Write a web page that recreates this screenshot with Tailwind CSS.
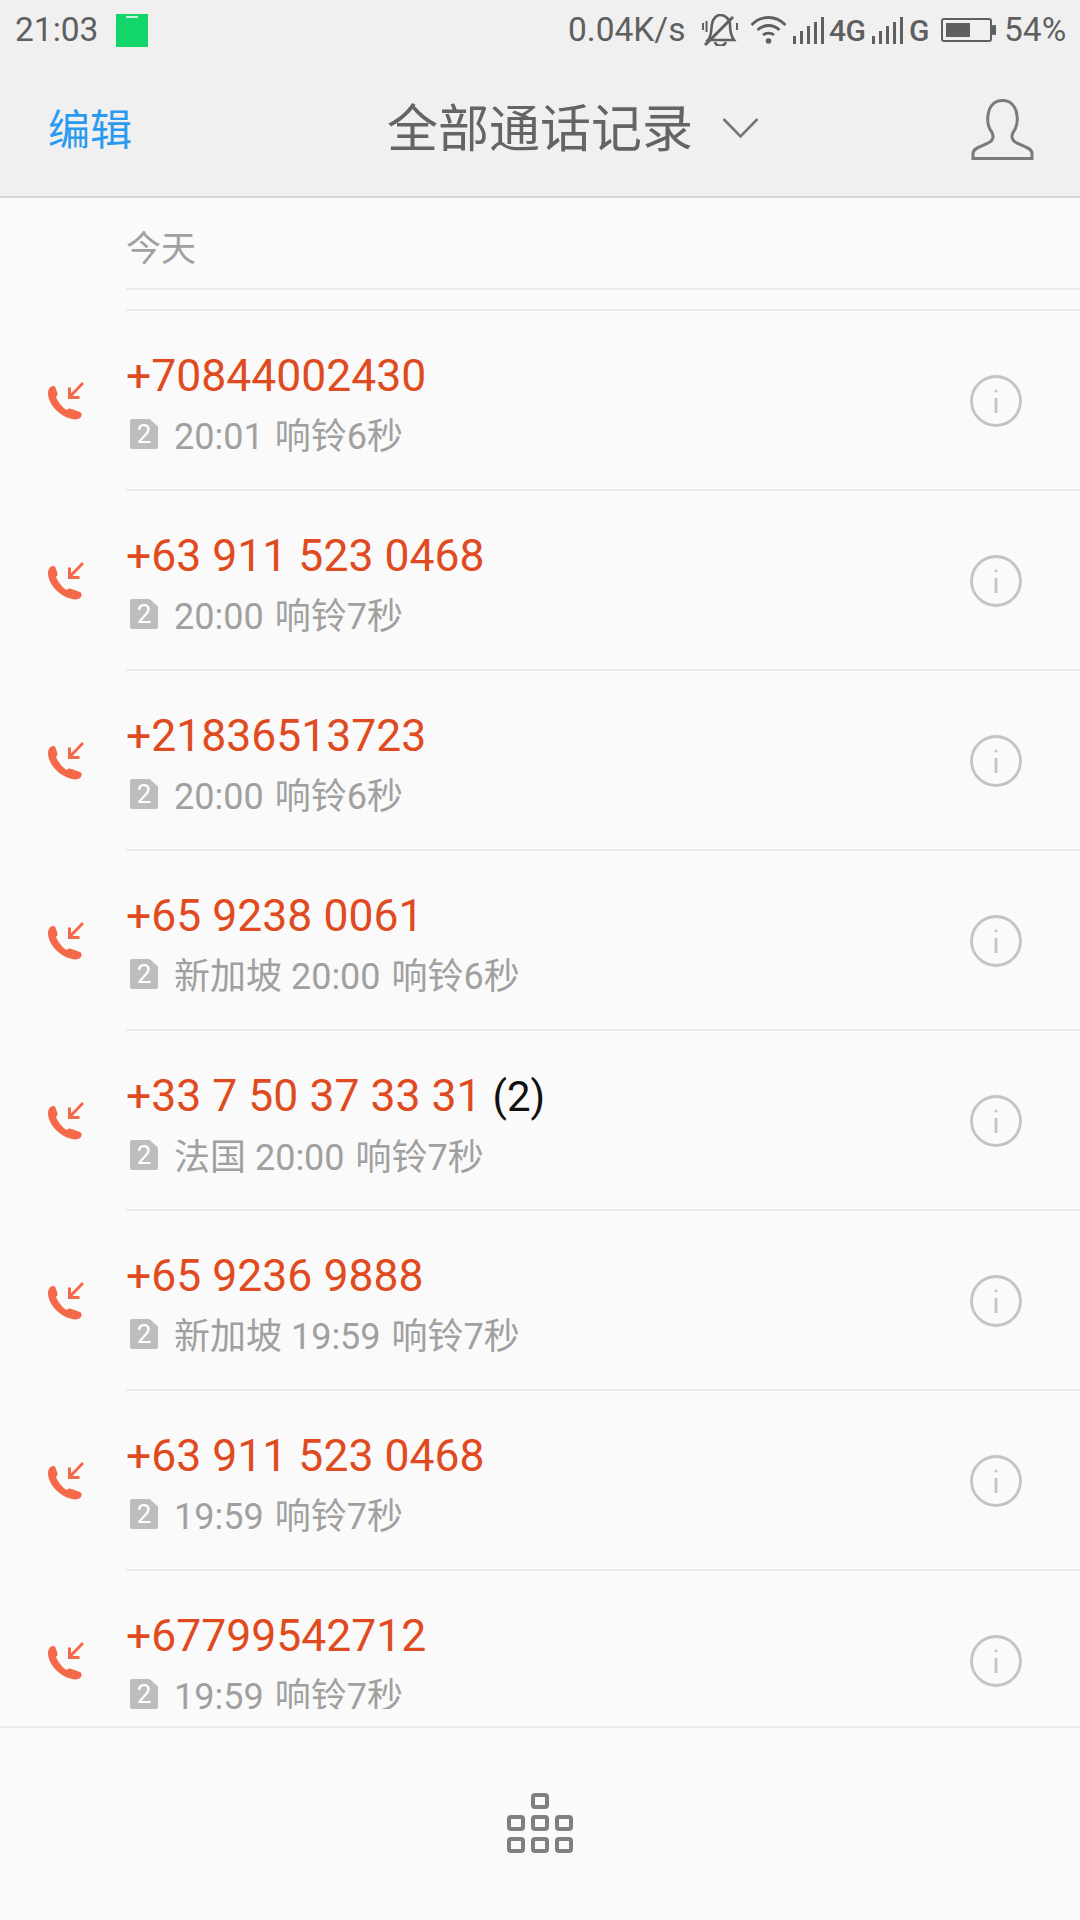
<!doctype html>
<html><head><meta charset="utf-8"><script src="https://cdn.jsdelivr.net/npm/@tailwindcss/browser@4"></script></head>
<body class="m-0">
<div class="w-[1080px] h-[1920px] bg-[#fafafa] overflow-hidden flex flex-col font-['Roboto','Noto_Sans_CJK_SC',sans-serif]">
 <header class="bg-[#f0f0f0] h-[198px] border-b-2 border-[#d8d8d8] flex flex-col shrink-0">
  <div class="h-[60px] flex items-center text-[33.5px] text-[#5f5f5f]">
   <span class="ml-[15px] w-[101px]">21:03</span>
   <div class="w-[32px] h-[33px] bg-[#12d66a] flex justify-center pt-[2px]"><div class="w-[12px] h-[2px] bg-[#c8f5dc]"></div></div>
   <span class="ml-[420px] w-[134px]">0.04K/s</span>
   <svg class="w-[36px] h-[32px]" viewBox="0 0 36 32" fill="none" stroke="#5f5f5f" stroke-width="2.600"><path d="M6 26 C10 22 9 14 10 10 C11 4 15 1 18 1 C23 1 28 5 28 11 C28 17 29 22 32 26 Z M13 28 C14 33 22 33 24 28"/><path d="M3 31 L31 3" stroke-width="3"/><path d="M1 9 V16 M4.500 7 V18 M35 9 V16" stroke-width="2"/></svg>
   <svg class="ml-[12px] w-[37px] h-[28px]" viewBox="0 0 37 28" fill="none" stroke="#5f5f5f" stroke-width="2.800"><path d="M1.500 9 C11 -1 26 -1 35.500 9 M7.500 14 C14 8 23 8 29.500 14 M13 19 C16 16.500 21 16.500 24 19"/><circle cx="18.500" cy="25" r="2.800" fill="#5f5f5f" stroke="none"/></svg>
   <svg class="ml-[6px] w-[31px] h-[27px]" viewBox="0 0 31 27" fill="#5f5f5f"><rect x="0" y="19" width="3" height="8"/><rect x="7" y="14" width="3" height="13"/><rect x="14" y="9" width="3" height="18"/><rect x="21" y="5" width="3" height="22"/><rect x="28" y="0" width="3" height="27"/></svg>
   <span class="ml-[5px] w-[38px] font-medium text-[30px] tracking-[-0.5px]">4G</span>
   <svg class="ml-[5px] w-[31px] h-[27px]" viewBox="0 0 31 27" fill="#5f5f5f"><rect x="0" y="19" width="3" height="8"/><rect x="7" y="14" width="3" height="13"/><rect x="14" y="9" width="3" height="18"/><rect x="21" y="5" width="3" height="22"/><rect x="28" y="0" width="3" height="27"/></svg>
   <span class="ml-[6px] w-[20px] font-medium text-[30px]">G</span>
   <svg class="ml-[12px] w-[55px] h-[24px]" viewBox="0 0 55 24" fill="none"><rect x="1" y="1" width="49" height="22" rx="2" stroke="#5f5f5f" stroke-width="2"/><rect x="5" y="5" width="24" height="14" fill="#5f5f5f"/><rect x="51" y="7" width="4" height="10" rx="1" fill="#5f5f5f"/></svg>
   <span class="ml-[8px]">54%</span>
  </div>
  <div class="flex-1 flex items-center">
   <span class="w-[387px] pl-[48px] pt-[4px] text-[42px] text-[#2a9af0]">编辑</span>
   <span class="text-[51px] pt-[4px] text-[#646464] w-[335px]">全部通话记录</span>
   <svg class="w-[37px] h-[22px]" viewBox="0 0 37 22" fill="none" stroke="#777" stroke-width="2.600"><path d="M1.500 2 L18.500 19.500 L35.500 2"/></svg>
   <svg class="ml-[212px] mt-[2px] w-[63px] h-[63px]" viewBox="0 0 63 62" fill="none" stroke="#7a7a7a" stroke-width="3"><path d="M2 60 H61 V55 C61 49 52 48 45 44 C41 42 40 38 42 34 C45 30 47 24 46 17 C45 7 39 2 31.500 2 C24 2 18 7 17 17 C16 24 18 30 21 34 C23 38 22 42 18 44 C11 48 2 49 2 55 Z"/></svg>
  </div>
 </header>
 <main class="h-[1511px] shrink-0 overflow-hidden">
  <div class="ml-[126px] h-[92px] border-b-2 border-[#ebebeb] flex items-center text-[35px] text-[#a0a0a0] pt-[14px]">今天</div>
  <div class="ml-[126px] h-[21px] border-b-2 border-[#ebebeb]"></div>

  <div class="flex h-[180px]"><div class="w-[126px] flex items-center pl-[44px]"><svg class="w-[40px] h-[42px]" viewBox="0 0 40 42" fill="none"><path d="M7 6.500 C9 5.500 11 6 11.500 7.500 L13.500 13.500 C13.800 15 13 16 12 17 C14 22 18 27 22.500 30 C24 28.500 25.500 28 27.500 29 L36 32 C38 33 38 35 37 37 C35.500 39 32 40 28 39 C15 36 4 24 4 13 C4 10 5 8 7 6.500Z" fill="#f4694a"/><path d="M39 3 L25.500 17 M25.500 7.500 V17.500 H35.500" stroke="#f4694a" stroke-width="3"/></svg></div><div class="flex-1 border-b-2 border-[#ebebeb] flex items-center"><div class="flex-1 self-start pt-[39px]"><div class="text-[44.500px] leading-[52px] text-[#e04a1f]">+70844002430</div><div class="mt-[11px] flex items-center text-[36px] leading-[48px] text-[#a0a0a0]"><div class="ml-[4px] mr-[16px] -translate-y-[3px] w-[28px] h-[30px] bg-[#bdbdbd] rounded-[2px] [clip-path:polygon(0_0,70%_0,100%_25%,100%_100%,0_100%)] flex items-center justify-center text-[26px] text-white">2</div><span>20:01<span class="ml-[11px]">响铃6秒</span></span></div></div><svg class="mr-[58px] mt-[2px] w-[52px] h-[52px]" viewBox="0 0 52 52" fill="none" stroke="#c4c4c4" stroke-width="2.800"><circle cx="26" cy="26" r="24.500"/><path d="M26 23 V38"/><circle cx="26" cy="16" r="1.500" fill="#c4c4c4" stroke="none"/></svg></div></div>

  <div class="flex h-[180px]"><div class="w-[126px] flex items-center pl-[44px]"><svg class="w-[40px] h-[42px]" viewBox="0 0 40 42" fill="none"><path d="M7 6.500 C9 5.500 11 6 11.500 7.500 L13.500 13.500 C13.800 15 13 16 12 17 C14 22 18 27 22.500 30 C24 28.500 25.500 28 27.500 29 L36 32 C38 33 38 35 37 37 C35.500 39 32 40 28 39 C15 36 4 24 4 13 C4 10 5 8 7 6.500Z" fill="#f4694a"/><path d="M39 3 L25.500 17 M25.500 7.500 V17.500 H35.500" stroke="#f4694a" stroke-width="3"/></svg></div><div class="flex-1 border-b-2 border-[#ebebeb] flex items-center"><div class="flex-1 self-start pt-[39px]"><div class="text-[44.500px] leading-[52px] text-[#e04a1f]">+63 911 523 0468</div><div class="mt-[11px] flex items-center text-[36px] leading-[48px] text-[#a0a0a0]"><div class="ml-[4px] mr-[16px] -translate-y-[3px] w-[28px] h-[30px] bg-[#bdbdbd] rounded-[2px] [clip-path:polygon(0_0,70%_0,100%_25%,100%_100%,0_100%)] flex items-center justify-center text-[26px] text-white">2</div><span>20:00<span class="ml-[11px]">响铃7秒</span></span></div></div><svg class="mr-[58px] mt-[2px] w-[52px] h-[52px]" viewBox="0 0 52 52" fill="none" stroke="#c4c4c4" stroke-width="2.800"><circle cx="26" cy="26" r="24.500"/><path d="M26 23 V38"/><circle cx="26" cy="16" r="1.500" fill="#c4c4c4" stroke="none"/></svg></div></div>

  <div class="flex h-[180px]"><div class="w-[126px] flex items-center pl-[44px]"><svg class="w-[40px] h-[42px]" viewBox="0 0 40 42" fill="none"><path d="M7 6.500 C9 5.500 11 6 11.500 7.500 L13.500 13.500 C13.800 15 13 16 12 17 C14 22 18 27 22.500 30 C24 28.500 25.500 28 27.500 29 L36 32 C38 33 38 35 37 37 C35.500 39 32 40 28 39 C15 36 4 24 4 13 C4 10 5 8 7 6.500Z" fill="#f4694a"/><path d="M39 3 L25.500 17 M25.500 7.500 V17.500 H35.500" stroke="#f4694a" stroke-width="3"/></svg></div><div class="flex-1 border-b-2 border-[#ebebeb] flex items-center"><div class="flex-1 self-start pt-[39px]"><div class="text-[44.500px] leading-[52px] text-[#e04a1f]">+21836513723</div><div class="mt-[11px] flex items-center text-[36px] leading-[48px] text-[#a0a0a0]"><div class="ml-[4px] mr-[16px] -translate-y-[3px] w-[28px] h-[30px] bg-[#bdbdbd] rounded-[2px] [clip-path:polygon(0_0,70%_0,100%_25%,100%_100%,0_100%)] flex items-center justify-center text-[26px] text-white">2</div><span>20:00<span class="ml-[11px]">响铃6秒</span></span></div></div><svg class="mr-[58px] mt-[2px] w-[52px] h-[52px]" viewBox="0 0 52 52" fill="none" stroke="#c4c4c4" stroke-width="2.800"><circle cx="26" cy="26" r="24.500"/><path d="M26 23 V38"/><circle cx="26" cy="16" r="1.500" fill="#c4c4c4" stroke="none"/></svg></div></div>

  <div class="flex h-[180px]"><div class="w-[126px] flex items-center pl-[44px]"><svg class="w-[40px] h-[42px]" viewBox="0 0 40 42" fill="none"><path d="M7 6.500 C9 5.500 11 6 11.500 7.500 L13.500 13.500 C13.800 15 13 16 12 17 C14 22 18 27 22.500 30 C24 28.500 25.500 28 27.500 29 L36 32 C38 33 38 35 37 37 C35.500 39 32 40 28 39 C15 36 4 24 4 13 C4 10 5 8 7 6.500Z" fill="#f4694a"/><path d="M39 3 L25.500 17 M25.500 7.500 V17.500 H35.500" stroke="#f4694a" stroke-width="3"/></svg></div><div class="flex-1 border-b-2 border-[#ebebeb] flex items-center"><div class="flex-1 self-start pt-[39px]"><div class="text-[44.500px] leading-[52px] text-[#e04a1f]">+65 9238 0061</div><div class="mt-[11px] flex items-center text-[36px] leading-[48px] text-[#a0a0a0]"><div class="ml-[4px] mr-[16px] -translate-y-[3px] w-[28px] h-[30px] bg-[#bdbdbd] rounded-[2px] [clip-path:polygon(0_0,70%_0,100%_25%,100%_100%,0_100%)] flex items-center justify-center text-[26px] text-white">2</div><span>新加坡 20:00<span class="ml-[11px]">响铃6秒</span></span></div></div><svg class="mr-[58px] mt-[2px] w-[52px] h-[52px]" viewBox="0 0 52 52" fill="none" stroke="#c4c4c4" stroke-width="2.800"><circle cx="26" cy="26" r="24.500"/><path d="M26 23 V38"/><circle cx="26" cy="16" r="1.500" fill="#c4c4c4" stroke="none"/></svg></div></div>

  <div class="flex h-[180px]"><div class="w-[126px] flex items-center pl-[44px]"><svg class="w-[40px] h-[42px]" viewBox="0 0 40 42" fill="none"><path d="M7 6.500 C9 5.500 11 6 11.500 7.500 L13.500 13.500 C13.800 15 13 16 12 17 C14 22 18 27 22.500 30 C24 28.500 25.500 28 27.500 29 L36 32 C38 33 38 35 37 37 C35.500 39 32 40 28 39 C15 36 4 24 4 13 C4 10 5 8 7 6.500Z" fill="#f4694a"/><path d="M39 3 L25.500 17 M25.500 7.500 V17.500 H35.500" stroke="#f4694a" stroke-width="3"/></svg></div><div class="flex-1 border-b-2 border-[#ebebeb] flex items-center"><div class="flex-1 self-start pt-[39px]"><div class="text-[44.500px] leading-[52px] text-[#e04a1f]">+33 7 50 37 33 31 <span class="text-[#111] text-[42px]">(2)</span></div><div class="mt-[11px] flex items-center text-[36px] leading-[48px] text-[#a0a0a0]"><div class="ml-[4px] mr-[16px] -translate-y-[3px] w-[28px] h-[30px] bg-[#bdbdbd] rounded-[2px] [clip-path:polygon(0_0,70%_0,100%_25%,100%_100%,0_100%)] flex items-center justify-center text-[26px] text-white">2</div><span>法国 20:00<span class="ml-[11px]">响铃7秒</span></span></div></div><svg class="mr-[58px] mt-[2px] w-[52px] h-[52px]" viewBox="0 0 52 52" fill="none" stroke="#c4c4c4" stroke-width="2.800"><circle cx="26" cy="26" r="24.500"/><path d="M26 23 V38"/><circle cx="26" cy="16" r="1.500" fill="#c4c4c4" stroke="none"/></svg></div></div>

  <div class="flex h-[180px]"><div class="w-[126px] flex items-center pl-[44px]"><svg class="w-[40px] h-[42px]" viewBox="0 0 40 42" fill="none"><path d="M7 6.500 C9 5.500 11 6 11.500 7.500 L13.500 13.500 C13.800 15 13 16 12 17 C14 22 18 27 22.500 30 C24 28.500 25.500 28 27.500 29 L36 32 C38 33 38 35 37 37 C35.500 39 32 40 28 39 C15 36 4 24 4 13 C4 10 5 8 7 6.500Z" fill="#f4694a"/><path d="M39 3 L25.500 17 M25.500 7.500 V17.500 H35.500" stroke="#f4694a" stroke-width="3"/></svg></div><div class="flex-1 border-b-2 border-[#ebebeb] flex items-center"><div class="flex-1 self-start pt-[39px]"><div class="text-[44.500px] leading-[52px] text-[#e04a1f]">+65 9236 9888</div><div class="mt-[11px] flex items-center text-[36px] leading-[48px] text-[#a0a0a0]"><div class="ml-[4px] mr-[16px] -translate-y-[3px] w-[28px] h-[30px] bg-[#bdbdbd] rounded-[2px] [clip-path:polygon(0_0,70%_0,100%_25%,100%_100%,0_100%)] flex items-center justify-center text-[26px] text-white">2</div><span>新加坡 19:59<span class="ml-[11px]">响铃7秒</span></span></div></div><svg class="mr-[58px] mt-[2px] w-[52px] h-[52px]" viewBox="0 0 52 52" fill="none" stroke="#c4c4c4" stroke-width="2.800"><circle cx="26" cy="26" r="24.500"/><path d="M26 23 V38"/><circle cx="26" cy="16" r="1.500" fill="#c4c4c4" stroke="none"/></svg></div></div>

  <div class="flex h-[180px]"><div class="w-[126px] flex items-center pl-[44px]"><svg class="w-[40px] h-[42px]" viewBox="0 0 40 42" fill="none"><path d="M7 6.500 C9 5.500 11 6 11.500 7.500 L13.500 13.500 C13.800 15 13 16 12 17 C14 22 18 27 22.500 30 C24 28.500 25.500 28 27.500 29 L36 32 C38 33 38 35 37 37 C35.500 39 32 40 28 39 C15 36 4 24 4 13 C4 10 5 8 7 6.500Z" fill="#f4694a"/><path d="M39 3 L25.500 17 M25.500 7.500 V17.500 H35.500" stroke="#f4694a" stroke-width="3"/></svg></div><div class="flex-1 border-b-2 border-[#ebebeb] flex items-center"><div class="flex-1 self-start pt-[39px]"><div class="text-[44.500px] leading-[52px] text-[#e04a1f]">+63 911 523 0468</div><div class="mt-[11px] flex items-center text-[36px] leading-[48px] text-[#a0a0a0]"><div class="ml-[4px] mr-[16px] -translate-y-[3px] w-[28px] h-[30px] bg-[#bdbdbd] rounded-[2px] [clip-path:polygon(0_0,70%_0,100%_25%,100%_100%,0_100%)] flex items-center justify-center text-[26px] text-white">2</div><span>19:59<span class="ml-[11px]">响铃7秒</span></span></div></div><svg class="mr-[58px] mt-[2px] w-[52px] h-[52px]" viewBox="0 0 52 52" fill="none" stroke="#c4c4c4" stroke-width="2.800"><circle cx="26" cy="26" r="24.500"/><path d="M26 23 V38"/><circle cx="26" cy="16" r="1.500" fill="#c4c4c4" stroke="none"/></svg></div></div>

  <div class="flex h-[180px]"><div class="w-[126px] flex items-center pl-[44px]"><svg class="w-[40px] h-[42px]" viewBox="0 0 40 42" fill="none"><path d="M7 6.500 C9 5.500 11 6 11.500 7.500 L13.500 13.500 C13.800 15 13 16 12 17 C14 22 18 27 22.500 30 C24 28.500 25.500 28 27.500 29 L36 32 C38 33 38 35 37 37 C35.500 39 32 40 28 39 C15 36 4 24 4 13 C4 10 5 8 7 6.500Z" fill="#f4694a"/><path d="M39 3 L25.500 17 M25.500 7.500 V17.500 H35.500" stroke="#f4694a" stroke-width="3"/></svg></div><div class="flex-1 border-b-2 border-[#ebebeb] flex items-center"><div class="flex-1 self-start pt-[39px]"><div class="text-[44.500px] leading-[52px] text-[#e04a1f]">+67799542712</div><div class="mt-[11px] flex items-center text-[36px] leading-[48px] text-[#a0a0a0]"><div class="ml-[4px] mr-[16px] -translate-y-[3px] w-[28px] h-[30px] bg-[#bdbdbd] rounded-[2px] [clip-path:polygon(0_0,70%_0,100%_25%,100%_100%,0_100%)] flex items-center justify-center text-[26px] text-white">2</div><span>19:59<span class="ml-[11px]">响铃7秒</span></span></div></div><svg class="mr-[58px] mt-[2px] w-[52px] h-[52px]" viewBox="0 0 52 52" fill="none" stroke="#c4c4c4" stroke-width="2.800"><circle cx="26" cy="26" r="24.500"/><path d="M26 23 V38"/><circle cx="26" cy="16" r="1.500" fill="#c4c4c4" stroke="none"/></svg></div></div>
 </main>
 <footer class="mt-[17px] flex-1 border-t-2 border-[#ebebeb] flex justify-center pt-[65px]">
  <div class="flex flex-col items-center gap-[6px]">
   <div class="w-[18px] h-[16px] border-[4px] border-[#808080] rounded-[4px]"></div>
   <div class="flex gap-[6px]"><div class="w-[18px] h-[16px] border-[4px] border-[#808080] rounded-[4px]"></div><div class="w-[18px] h-[16px] border-[4px] border-[#808080] rounded-[4px]"></div><div class="w-[18px] h-[16px] border-[4px] border-[#808080] rounded-[4px]"></div></div>
   <div class="flex gap-[6px]"><div class="w-[18px] h-[16px] border-[4px] border-[#808080] rounded-[4px]"></div><div class="w-[18px] h-[16px] border-[4px] border-[#808080] rounded-[4px]"></div><div class="w-[18px] h-[16px] border-[4px] border-[#808080] rounded-[4px]"></div></div>
  </div>
 </footer>
</div>
</body></html>
